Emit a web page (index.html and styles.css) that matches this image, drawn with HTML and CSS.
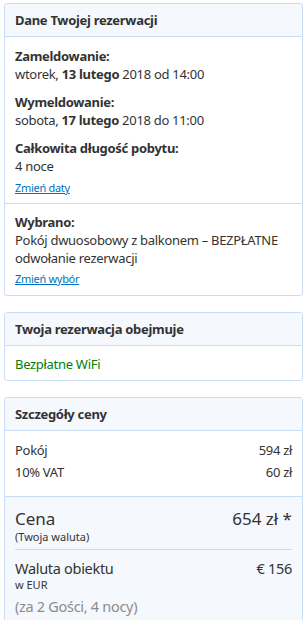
FILE: index.html
```html
<!DOCTYPE html>
<html lang="pl">
<head>
<meta charset="utf-8">
<link rel="stylesheet" href="styles.css">
</head>
<body>
<div class="page">
  <section class="card">
    <h2 class="card-head">Dane Twojej rezerwacji</h2>
    <div class="card-body">
      <div class="group">
        <div class="label">Zameldowanie:</div>
        <div class="value">wtorek, <b>13 lutego</b> 2018 od 14:00</div>
      </div>
      <div class="group">
        <div class="label">Wymeldowanie:</div>
        <div class="value">sobota, <b>17 lutego</b> 2018 do 11:00</div>
      </div>
      <div class="group last">
        <div class="label">Całkowita długość pobytu:</div>
        <div class="value">4 noce</div>
      </div>
      <a class="link" href="#">Zmień daty</a>
    </div>
    <div class="card-body sep">
      <div class="group tight">
        <div class="label">Wybrano:</div>
        <div class="value">Pokój dwuosobowy z balkonem – BEZPŁATNE odwołanie rezerwacji</div>
      </div>
      <a class="link" href="#">Zmień wybór</a>
    </div>
  </section>

  <section class="card">
    <h2 class="card-head">Twoja rezerwacja obejmuje</h2>
    <div class="card-body short">
      <div class="green">Bezpłatne WiFi</div>
    </div>
  </section>

  <section class="card">
    <h2 class="card-head">Szczegóły ceny</h2>
    <div class="rows">
      <div class="row"><span>Pokój</span><span>594 zł</span></div>
      <div class="row"><span>10% VAT</span><span>60 zł</span></div>
    </div>
    <div class="total">
      <div class="total-row">
        <div>
          <div class="big">Cena</div>
          <div class="small">(Twoja waluta)</div>
        </div>
        <div class="big">654 zł *</div>
      </div>
      <div class="total-row second">
        <div>
          <div class="mid">Waluta obiektu</div>
          <div class="small tiny">w EUR</div>
        </div>
        <div class="mid">€ 156</div>
      </div>
      <div class="note">(za 2 Gości, 4 nocy)</div>
    </div>
  </section>
</div>
</body>
</html>
```
FILE: styles.css
```css
* { box-sizing: border-box; }
html, body { margin: 0; padding: 0; background: #fff; }
body {
  font-family: "Noto Sans", "Open Sans", sans-serif;
  font-size: 13px;
  letter-spacing: -0.3px;
  color: #333;
}
.page {
  padding: 3px 3px 0 4px;
  display: flex;
  flex-direction: column;
  gap: 16px;
}
.card {
  border: 1px solid #c9def5;
  border-radius: 3px;
  overflow: hidden;
}
.card-head {
  margin: 0;
  background: #f5f8fd;
  border-bottom: 1px solid #c9def5;
  font-size: 13px;
  font-weight: 700;
  line-height: 20px;
  padding: 6px 10px;
  color: #333;
}
.card-body {
  padding: 10px 10px 7px;
}
.card-body.sep { border-top: 1px solid #c9def5; padding: 9px 10px 8px; }
.card-body.short { padding: 8px 10px 6px; }
.group { margin-bottom: 10px; }
.group.last { margin-bottom: 5px; }
.group.tight { margin-bottom: 4px; }
.label { font-weight: 700; line-height: 18px; }
.value { line-height: 18px; }
.value b { font-weight: 700; }
.link {
  display: block;
  font-size: 11px;
  line-height: 16px;
  color: #0071c2;
  text-decoration: underline;
  width: max-content;
}
.green { color: #008009; line-height: 20px; }
.rows { padding: 8px 10px 13px; }
.row {
  display: flex;
  justify-content: space-between;
  line-height: 22px;
}
.total {
  background: #f5f8fd;
  border-top: 1px solid #c9def5;
  padding: 11px 10px 20px;
}
.total-row {
  display: flex;
  justify-content: space-between;
  align-items: flex-start;
}
.total-row.second {
  border-top: 1px solid #d9d9d9;
  margin-top: 5px;
  padding-top: 8px;
}
.big { font-size: 17px; line-height: 22px; letter-spacing: 0; }
.mid { font-size: 14.5px; line-height: 20px; }
.small { font-size: 11px; line-height: 14px; letter-spacing: 0; }
.small.tiny { line-height: 13px; }
.note { font-size: 14.5px; color: #8c8c8c; margin-top: 5px; line-height: 20px; }
```
